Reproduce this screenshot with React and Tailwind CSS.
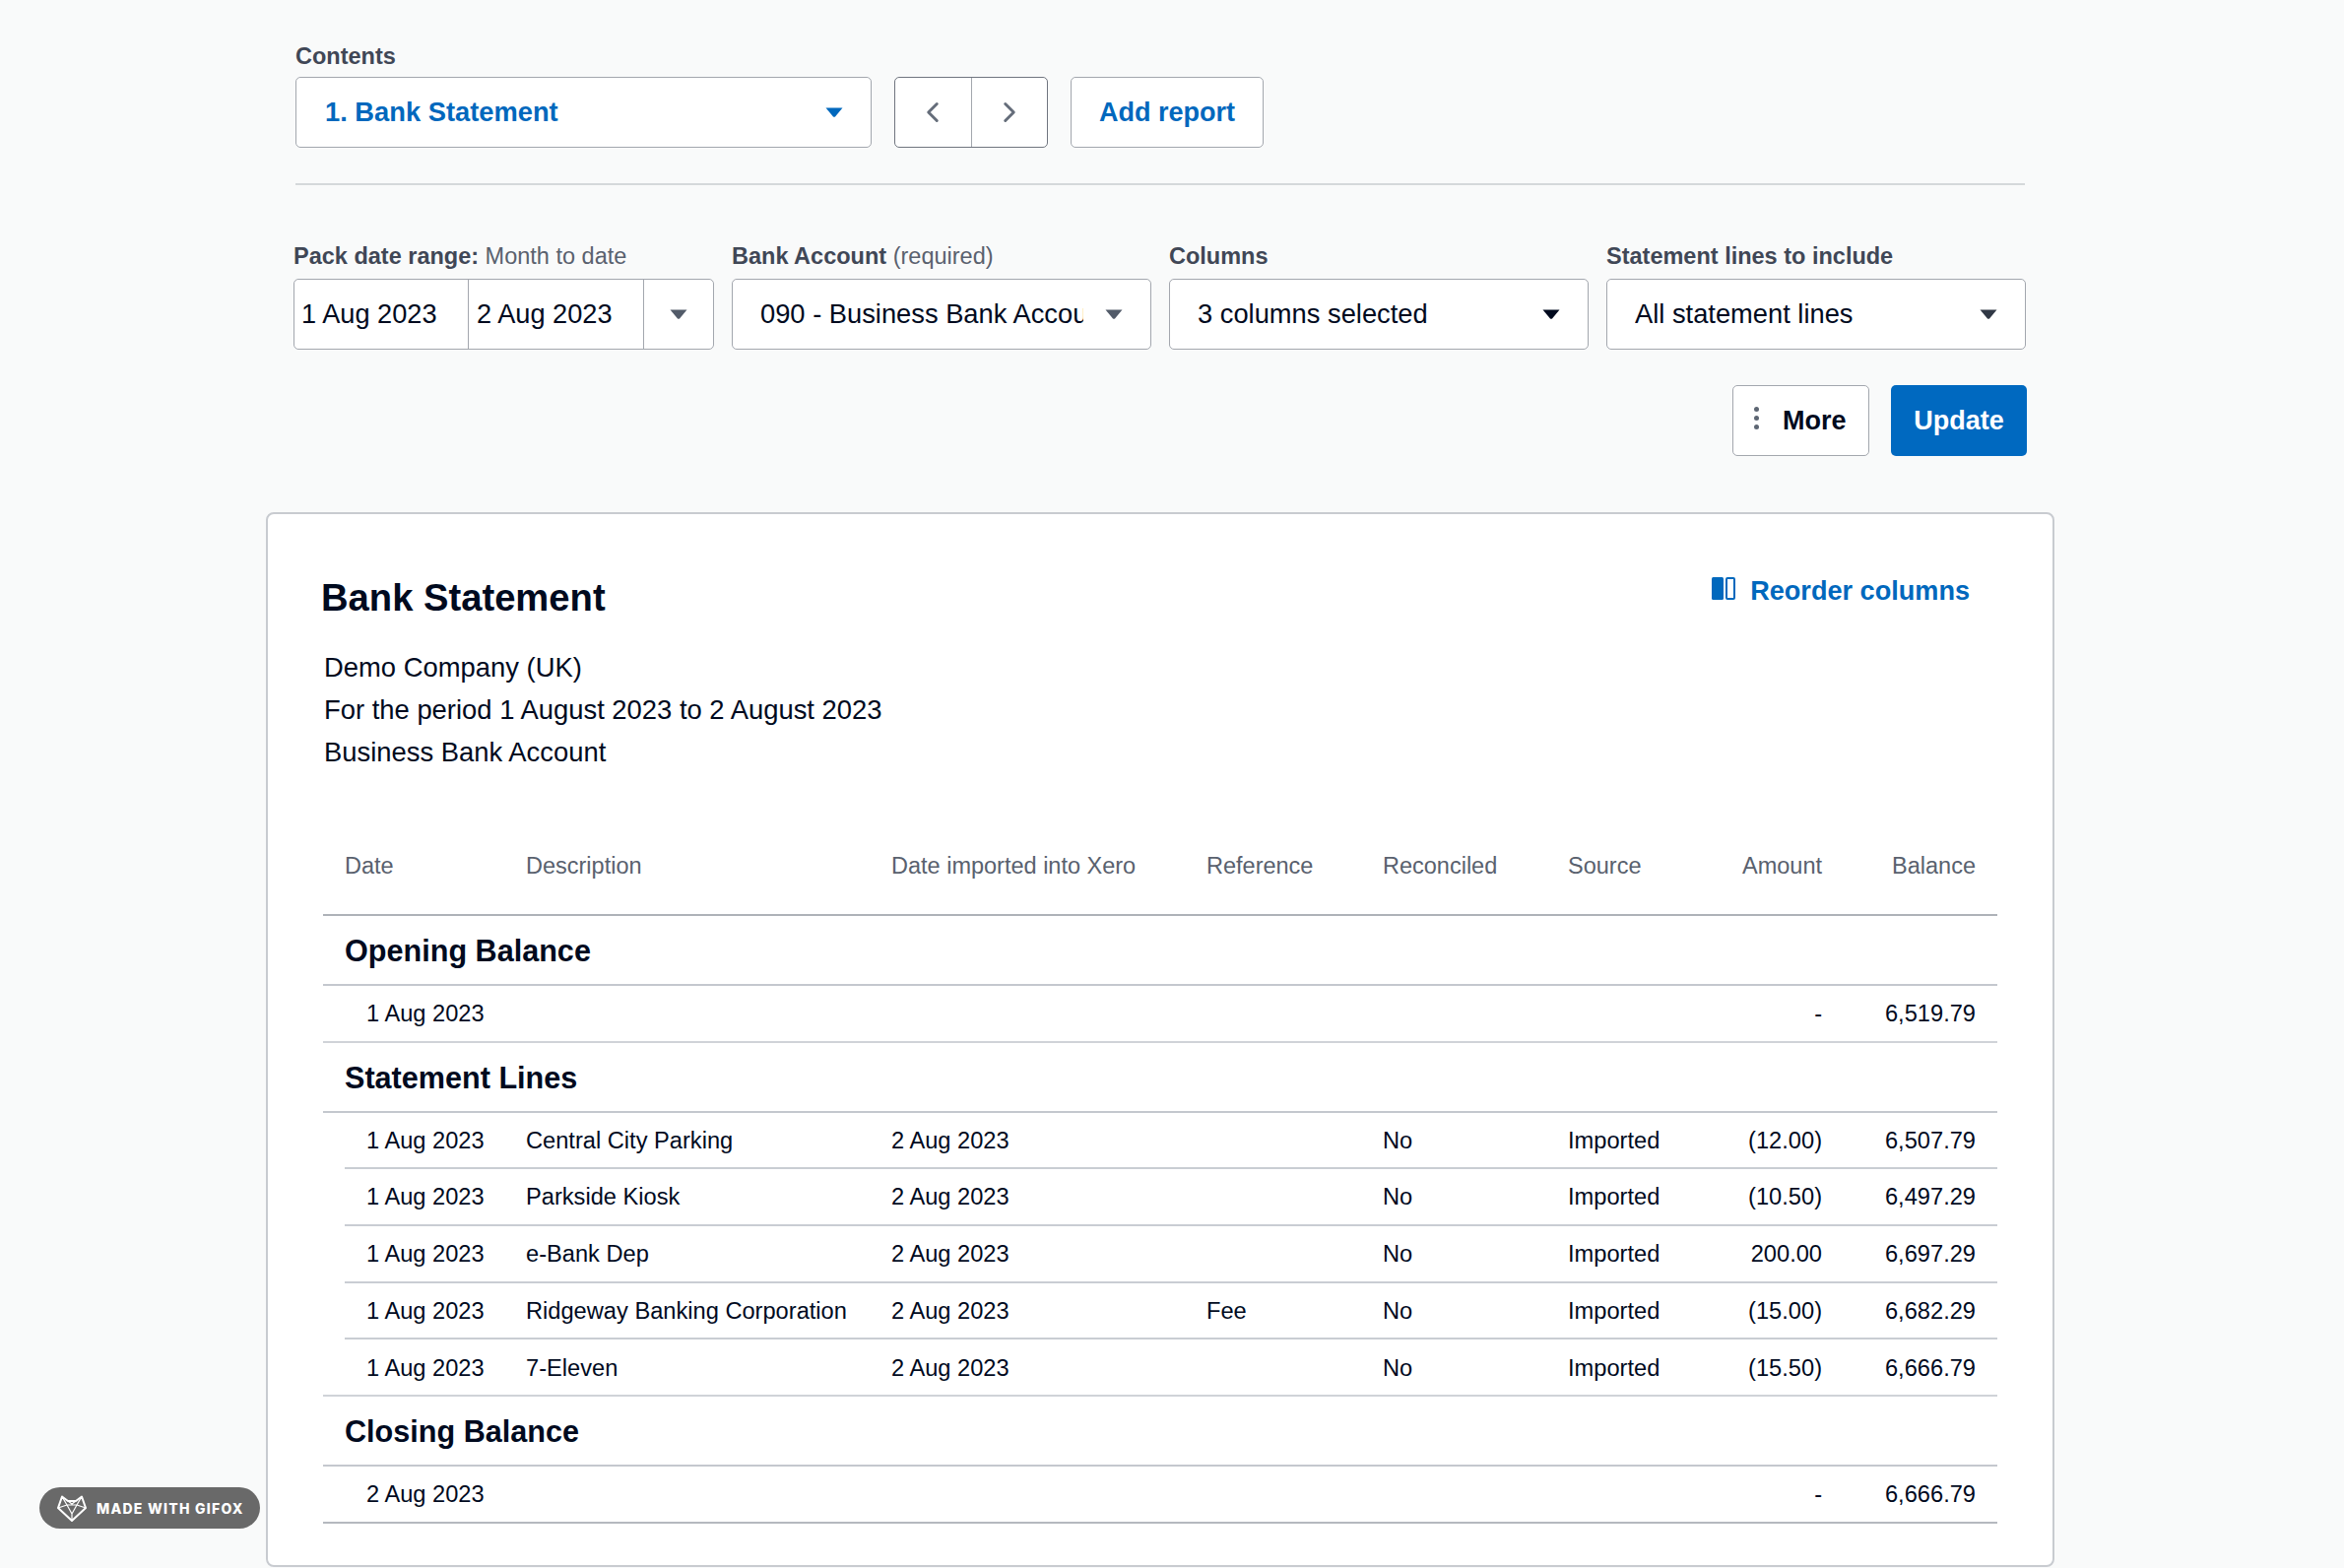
import { ChevronLeft, ChevronRight } from 'lucide-react';

const ROW_GRID = 'grid grid-cols-[184px_371px_320px_179px_188px_150px_152px_156px] items-center';

const STATEMENT_LINES = [
  { date: '1 Aug 2023', description: 'Central City Parking', imported: '2 Aug 2023', reference: '', reconciled: 'No', source: 'Imported', amount: '(12.00)', balance: '6,507.79' },
  { date: '1 Aug 2023', description: 'Parkside Kiosk', imported: '2 Aug 2023', reference: '', reconciled: 'No', source: 'Imported', amount: '(10.50)', balance: '6,497.29' },
  { date: '1 Aug 2023', description: 'e-Bank Dep', imported: '2 Aug 2023', reference: '', reconciled: 'No', source: 'Imported', amount: '200.00', balance: '6,697.29' },
  { date: '1 Aug 2023', description: 'Ridgeway Banking Corporation', imported: '2 Aug 2023', reference: 'Fee', reconciled: 'No', source: 'Imported', amount: '(15.00)', balance: '6,682.29' },
  { date: '1 Aug 2023', description: '7-Eleven', imported: '2 Aug 2023', reference: '', reconciled: 'No', source: 'Imported', amount: '(15.50)', balance: '6,666.79' },
];

function Caret({ color = 'text-[#000a1e]' }) {
  return (
    <svg className={`w-[18px] h-[10px] shrink-0 ${color}`} viewBox="0 0 18 10">
      <path d="M0.5 0.5 H17.5 L10 9.5 Q9 10 8 9.5 Z" fill="currentColor" />
    </svg>
  );
}

function Label({ children }) {
  return <div className="h-[32px] mb-[7px] leading-[32px] text-[23.5px] font-bold text-[#404756] whitespace-nowrap">{children}</div>;
}

function Select({ value, caret }) {
  return (
    <div className="h-[72px] flex items-center justify-between pl-[28px] pr-[28px] bg-white border border-[#a3a7ae] rounded-[5px]">
      <span className="w-[328px] overflow-hidden whitespace-nowrap text-[27.3px] text-[#000a1e]">{value}</span>
      <Caret color={caret} />
    </div>
  );
}

function Row({ cells, inset, strong }) {
  const row = (
    <div className={`${ROW_GRID} h-[55.7px] pt-[2px] text-[23.65px] text-[#000a1e] whitespace-nowrap`}>
      <div className="pl-[44px]">{cells.date}</div>
      <div className="pl-[22px]">{cells.description}</div>
      <div className="pl-[22px]">{cells.imported}</div>
      <div className="pl-[22px]">{cells.reference}</div>
      <div className="pl-[22px]">{cells.reconciled}</div>
      <div className="pl-[22px]">{cells.source}</div>
      <div className="pr-[22px] text-right">{cells.amount}</div>
      <div className="pr-[22px] text-right">{cells.balance}</div>
    </div>
  );
  if (inset) {
    return (
      <div className="border-b-2 border-[#c9cdd3] ml-[22px]">
        <div className="-ml-[22px]">{row}</div>
      </div>
    );
  }
  return <div className={`border-b-2 ${strong ? 'border-[#b5b9bf]' : 'border-[#d0d3d8]'}`}>{row}</div>;
}

function Section({ title }) {
  return (
    <div className="h-[71px] pl-[22px] pt-[3px] flex items-center border-b-2 border-[#c4c8ce] text-[30.6px] font-bold text-[#000a1e]">
      {title}
    </div>
  );
}

function FoxLogo() {
  return (
    <svg className="w-[30px] h-[27px]" viewBox="0 0 30 27" fill="none" stroke="white" strokeWidth="2" strokeLinejoin="round">
      <path d="M5 1.5 L11 6 H19 L25 1.5 L29 13 L15 26 L1 13 Z" />
      <path d="M1 13 L10 10 L15 19 L20 10 L29 13 M5 1.5 L10 10 M25 1.5 L20 10 M11 6 L15 9 L19 6 M10 10 H20 M15 19 V26" strokeWidth="1.2" />
    </svg>
  );
}

export default function App() {
  return (
    <div className="relative w-[2380px] h-[1592px] overflow-hidden bg-[#f9fafa] [font-family:Liberation_Sans,Arial,sans-serif]">
      <div className="ml-[270px] w-[1816px] pt-[41px]">
        <div className="pl-[30px] pr-[30px]">
          <div className="h-[32px] mb-[5px] leading-[32px] text-[23.5px] font-bold text-[#404756]">Contents</div>
          <div className="flex">
            <div className="w-[585px] h-[72px] flex items-center justify-between pl-[29px] pr-[28px] bg-white border border-[#a3a7ae] rounded-[5px]">
              <span className="text-[27.3px] font-bold text-[#0068bd]">1. Bank Statement</span>
              <Caret color="text-[#0068bd]" />
            </div>
            <div className="ml-[23px] w-[156px] h-[72px] flex bg-white border border-[#70757f] rounded-[5px] text-[#656d7a]">
              <div className="flex-1 flex items-center justify-center border-r border-[#a3a7ae]">
                <ChevronLeft className="w-[34px] h-[34px]" strokeWidth={2.1} />
              </div>
              <div className="flex-1 flex items-center justify-center">
                <ChevronRight className="w-[34px] h-[34px]" strokeWidth={2.1} />
              </div>
            </div>
            <div className="ml-[23px] w-[196px] h-[72px] flex items-center justify-center bg-white border border-[#a3a7ae] rounded-[5px] text-[27px] font-bold text-[#0068bd]">
              Add report
            </div>
          </div>
          <div className="mt-[36px] h-[2px] bg-[#d5d8da]" />
        </div>

        <div className="mt-[56px] pl-[29px] pr-[29px] grid grid-cols-4 gap-x-[18px]">
          <div className="-ml-px">
            <Label>Pack date range: <span className="font-normal text-[#59616e]">Month to date</span></Label>
            <div className="h-[72px] flex bg-white border border-[#a3a7ae] rounded-[5px] text-[27.2px] text-[#000a1e] whitespace-nowrap">
              <div className="w-[177px] pl-[7px] flex items-center border-r border-[#a3a7ae]">1 Aug 2023</div>
              <div className="w-[178px] pl-[8px] flex items-center border-r border-[#a3a7ae]">2 Aug 2023</div>
              <div className="flex-1 flex items-center justify-center">
                <Caret color="text-[#525b69]" />
              </div>
            </div>
          </div>
          <div>
            <Label>Bank Account <span className="font-normal text-[#59616e]">(required)</span></Label>
            <Select value="090 - Business Bank Account" caret="text-[#525b69]" />
          </div>
          <div>
            <Label>Columns</Label>
            <Select value="3 columns selected" />
          </div>
          <div>
            <Label>Statement lines to include</Label>
            <Select value="All statement lines" caret="text-[#303845]" />
          </div>
        </div>

        <div className="mt-[36px] pr-[28px] flex justify-end gap-[22px]">
          <div className="w-[139px] h-[72px] flex items-center pl-[21px] bg-white border border-[#a3a7ae] rounded-[5px]">
            <div className="flex flex-col gap-[4px] -mt-[6px]">
              <span className="w-[5px] h-[5px] rounded-full bg-[#5d6673]" />
              <span className="w-[5px] h-[5px] rounded-full bg-[#5d6673]" />
              <span className="w-[5px] h-[5px] rounded-full bg-[#5d6673]" />
            </div>
            <span className="ml-[24px] text-[27px] font-bold text-[#000a1e]">More</span>
          </div>
          <div className="w-[138px] h-[72px] flex items-center justify-center bg-[#0069c0] rounded-[5px] text-[27px] font-bold text-white">
            Update
          </div>
        </div>

        <div className="mt-[57px] h-[1071px] bg-white border-2 border-[#c8cbd0] rounded-[8px] pt-[63px] px-[56px]">
          <div className="flex justify-between">
            <h1 className="h-[44px] leading-[44px] -ml-[2px] text-[38.2px] font-bold text-[#000a1e]">Bank Statement</h1>
            <div className="flex items-start pr-[28px]">
              <svg className="w-[24px] h-[23px] mt-[1px] text-[#0068bd]" viewBox="0 0 24 23">
                <rect x="0" y="0" width="12" height="23" rx="1.5" fill="currentColor" />
                <rect x="15" y="1" width="8" height="21" rx="1" fill="none" stroke="currentColor" strokeWidth="2" />
              </svg>
              <span className="ml-[15px] leading-[30px] text-[27.1px] font-bold text-[#0068bd]">Reorder columns</span>
            </div>
          </div>
          <div className="mt-[27px] pl-px text-[27.4px] leading-[43px] text-[#000a1e]">
            <div>Demo Company (UK)</div>
            <div>For the period 1 August 2023 to 2 August 2023</div>
            <div>Business Bank Account</div>
          </div>

          <div className={`${ROW_GRID} mt-[45px] h-[100px] pt-[2px] border-b-2 border-[#aeb2b8] text-[23.5px] text-[#59616e] whitespace-nowrap`}>
            <div className="pl-[22px]">Date</div>
            <div className="pl-[22px]">Description</div>
            <div className="pl-[22px]">Date imported into Xero</div>
            <div className="pl-[22px]">Reference</div>
            <div className="pl-[22px]">Reconciled</div>
            <div className="pl-[22px]">Source</div>
            <div className="pr-[22px] text-right">Amount</div>
            <div className="pr-[22px] text-right">Balance</div>
          </div>

          <Section title="Opening Balance" />
          <Row cells={{ date: '1 Aug 2023', amount: '-', balance: '6,519.79' }} />
          <Section title="Statement Lines" />
          {STATEMENT_LINES.map((line, i) => (
            <Row key={i} cells={line} inset={i < STATEMENT_LINES.length - 1} />
          ))}
          <Section title="Closing Balance" />
          <Row cells={{ date: '2 Aug 2023', amount: '-', balance: '6,666.79' }} strong />
        </div>
      </div>

      <div className="absolute left-[40px] top-[1510px] w-[224px] h-[42px] flex items-center pl-[18px] rounded-full bg-[#696969] text-white">
        <FoxLogo />
        <span className="ml-[10px] [font-family:Inter,sans-serif] text-[14px] font-extrabold tracking-[1.25px] whitespace-nowrap">MADE WITH GIFOX</span>
      </div>
    </div>
  );
}
